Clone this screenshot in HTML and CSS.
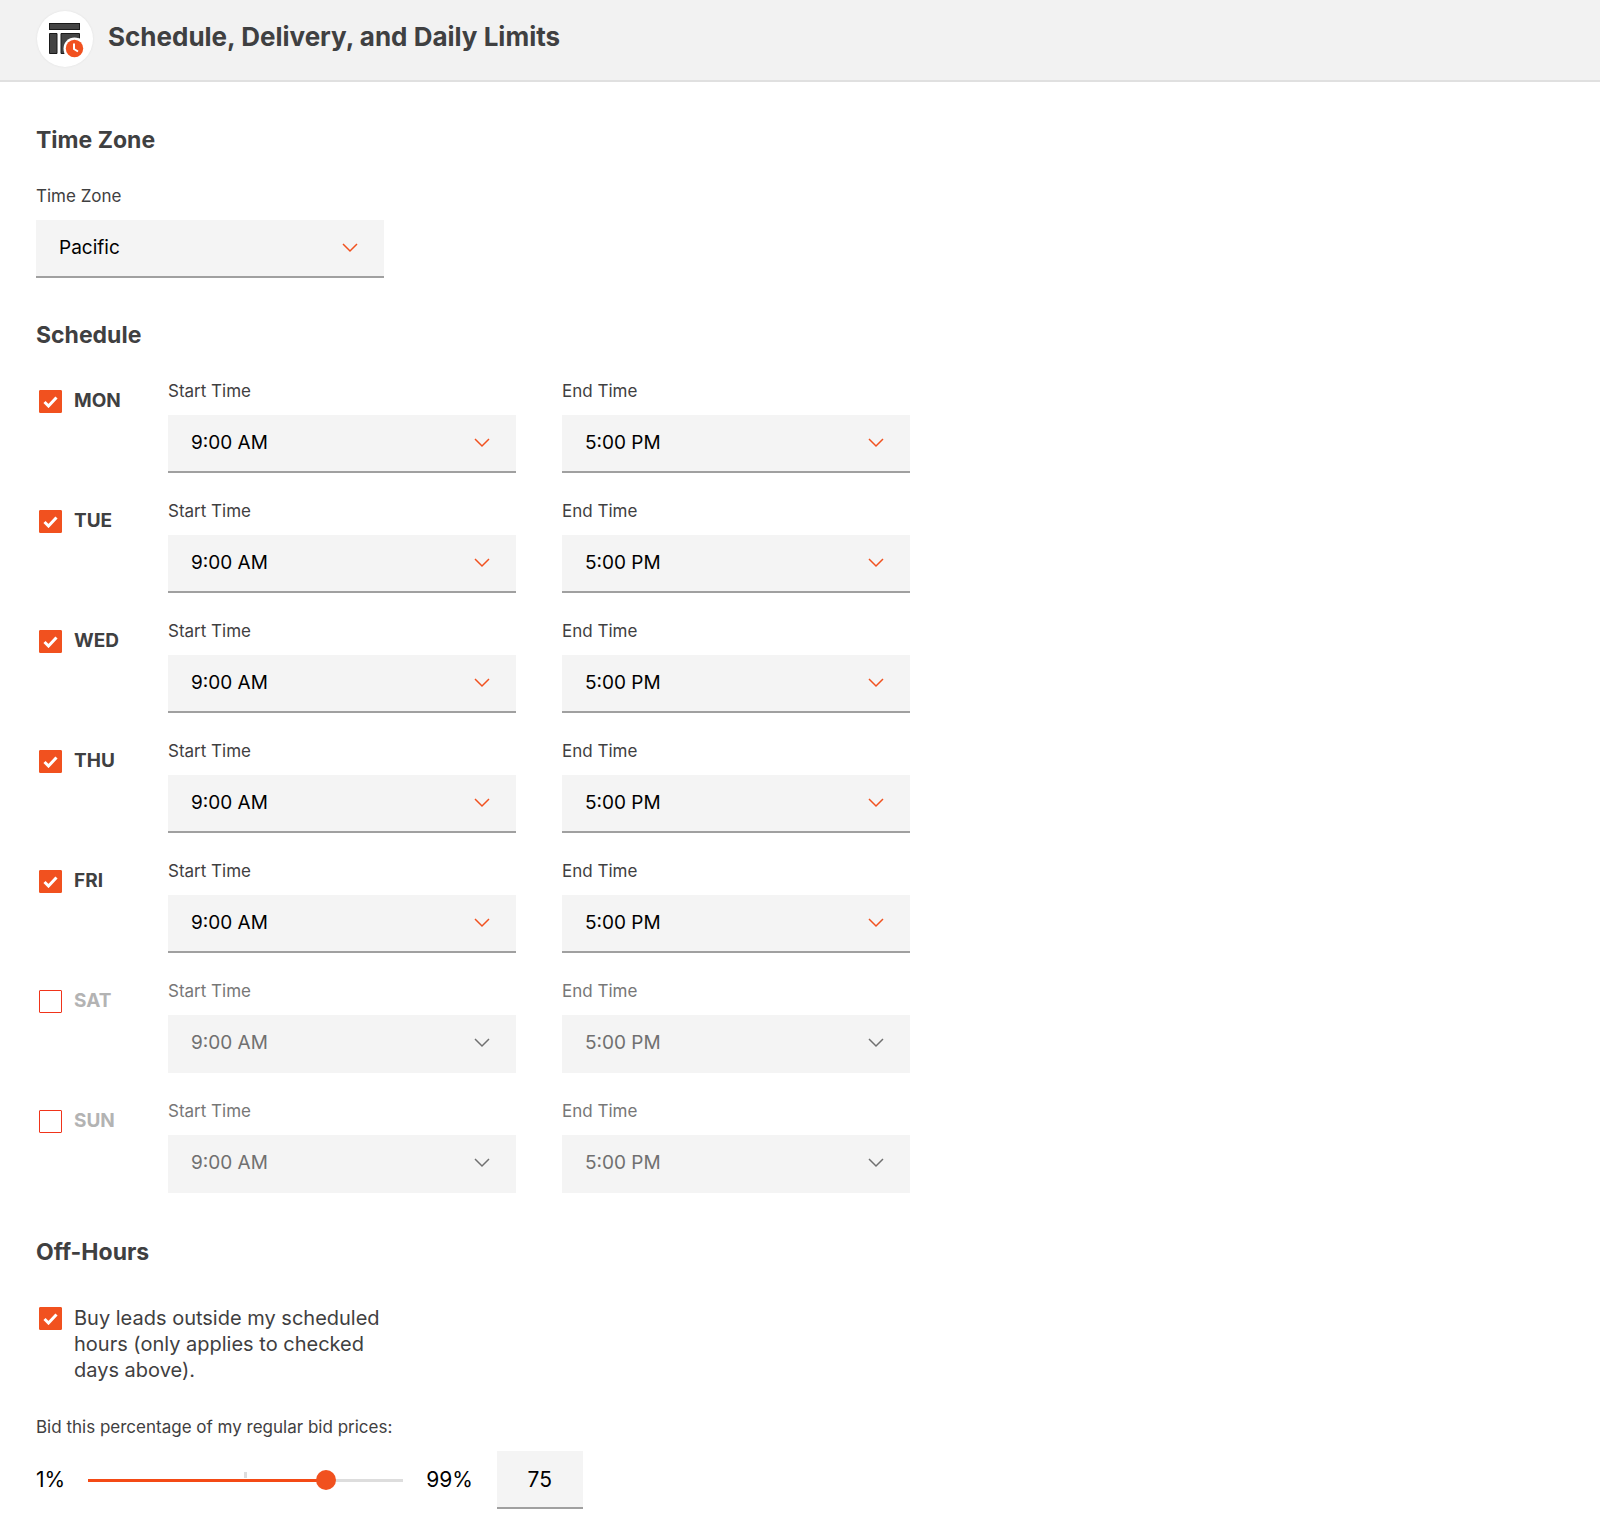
FILE: index.html
```
<!DOCTYPE html>
<html lang="en">
<head>
    <meta charset="utf-8">
    <title>Schedule, Delivery, and Daily Limits</title>
    <link rel="stylesheet" href="styles.css">
</head>
<body>
    <header class="header">
        <span class="logo">
            <svg width="56" height="56" viewBox="0 0 56 56" aria-hidden="true">
                <rect x="12.500" y="12.500" width="30" height="6" fill="#444" stroke="#1a1a1a"/>
                <path d="M12.500 22.500h7.500v20h-7.500zM24 22.500h18.500v20H24z" fill="#444" stroke="#1a1a1a"/>
                <path d="M27.500 46V38a10.500 10.500 0 0 1 10.500-10.500h8V46z" fill="#fff"/>
                <circle cx="37.500" cy="37.500" r="11" fill="#fff"/>
                <circle cx="37.500" cy="37.500" r="8.700" fill="#f1511f"/>
                <path d="M37 32.500v5.500l4 2.500" fill="none" stroke="#fff" stroke-width="2"/>
            </svg>
        </span>
        <h1>Schedule, Delivery, and Daily Limits</h1>
    </header>

    <main class="main">
        <section class="section">
            <h2>Time Zone</h2>
            <div class="field">
                <label for="zone">Time Zone</label>
                <select id="zone">
                    <option>Eastern</option>
                    <option>Central</option>
                    <option>Mountain</option>
                    <option selected>Pacific</option>
                </select>
            </div>
        </section>

        <section class="section">
            <h2>Schedule</h2>
            <ul class="days">
                <li class="day">
                    <label class="check"><input type="checkbox" checked><b>MON</b></label>
                    <div class="field">
                        <label for="mon-start">Start Time</label>
                        <select id="mon-start"><option>9:00 AM</option></select>
                    </div>
                    <div class="field">
                        <label for="mon-end">End Time</label>
                        <select id="mon-end"><option>5:00 PM</option></select>
                    </div>
                </li>
                <li class="day">
                    <label class="check"><input type="checkbox" checked><b>TUE</b></label>
                    <div class="field">
                        <label for="tue-start">Start Time</label>
                        <select id="tue-start"><option>9:00 AM</option></select>
                    </div>
                    <div class="field">
                        <label for="tue-end">End Time</label>
                        <select id="tue-end"><option>5:00 PM</option></select>
                    </div>
                </li>
                <li class="day">
                    <label class="check"><input type="checkbox" checked><b>WED</b></label>
                    <div class="field">
                        <label for="wed-start">Start Time</label>
                        <select id="wed-start"><option>9:00 AM</option></select>
                    </div>
                    <div class="field">
                        <label for="wed-end">End Time</label>
                        <select id="wed-end"><option>5:00 PM</option></select>
                    </div>
                </li>
                <li class="day">
                    <label class="check"><input type="checkbox" checked><b>THU</b></label>
                    <div class="field">
                        <label for="thu-start">Start Time</label>
                        <select id="thu-start"><option>9:00 AM</option></select>
                    </div>
                    <div class="field">
                        <label for="thu-end">End Time</label>
                        <select id="thu-end"><option>5:00 PM</option></select>
                    </div>
                </li>
                <li class="day">
                    <label class="check"><input type="checkbox" checked><b>FRI</b></label>
                    <div class="field">
                        <label for="fri-start">Start Time</label>
                        <select id="fri-start"><option>9:00 AM</option></select>
                    </div>
                    <div class="field">
                        <label for="fri-end">End Time</label>
                        <select id="fri-end"><option>5:00 PM</option></select>
                    </div>
                </li>
                <li class="day off">
                    <label class="check"><input type="checkbox"><b>SAT</b></label>
                    <div class="field">
                        <label for="sat-start">Start Time</label>
                        <select id="sat-start" disabled><option>9:00 AM</option></select>
                    </div>
                    <div class="field">
                        <label for="sat-end">End Time</label>
                        <select id="sat-end" disabled><option>5:00 PM</option></select>
                    </div>
                </li>
                <li class="day off">
                    <label class="check"><input type="checkbox"><b>SUN</b></label>
                    <div class="field">
                        <label for="sun-start">Start Time</label>
                        <select id="sun-start" disabled><option>9:00 AM</option></select>
                    </div>
                    <div class="field">
                        <label for="sun-end">End Time</label>
                        <select id="sun-end" disabled><option>5:00 PM</option></select>
                    </div>
                </li>
            </ul>
        </section>

        <section class="section">
            <h2>Off-Hours</h2>
            <label class="check buy">
                <input type="checkbox" checked>
                <span>Buy leads outside my scheduled hours (only applies to checked days above).</span>
            </label>
            <label class="bid-label" for="bid">Bid this percentage of my regular bid prices:</label>
            <div class="bid">
                <span>1%</span>
                <div class="slider">
                    <input type="range" id="bid" min="1" max="99" value="75" style="--fill: 75.5%">
                </div>
                <span>99%</span>
                <input type="text" class="number" value="75" aria-label="Bid percentage">
            </div>
        </section>
    </main>
</body>
</html>
```
FILE: styles.css
```
* {
    box-sizing: border-box;
    margin: 0;
    padding: 0;
}

body {
    background: #fff;
    color: #3f4041;
    font-family: Inter, Roboto, sans-serif;
    font-size: 19px;
    line-height: 26px;
}

ul {
    list-style: none;
}

/* header */
.header {
    display: flex;
    align-items: center;
    gap: 15px;
    padding: 11px 37px 13px;
    background: #f2f2f2;
    border-bottom: 2px solid #e0e0e0;
}

.logo {
    width: 56px;
    height: 56px;
    border-radius: 50%;
    background: #fff;
    box-shadow: 0 0 2px #ddd;
}

.logo svg {
    display: block;
}

h1 {
    padding-bottom: 4px;
    font-size: 26px;
    line-height: 32px;
}

h2 {
    margin-bottom: 30px;
    font-size: 23px;
    line-height: 28px;
}

/* sections */
.main {
    padding: 44px 36px 24px;
}

.section {
    margin-bottom: 43px;
}

.section:last-child {
    margin-bottom: 0;
}

.field {
    width: 348px;
}

.field label {
    display: block;
    margin-bottom: 12px;
    font-size: 17px;
    line-height: 24px;
}

select {
    display: block;
    width: 100%;
    height: 58px;
    padding: 0 23px;
    appearance: none;
    border: 0;
    border-bottom: 2px solid #a0a0a0;
    border-radius: 0;
    background: #f4f4f4 url("data:image/svg+xml,%3Csvg xmlns='http://www.w3.org/2000/svg' width='16' height='10'%3E%3Cpath d='M1 1l7 7 7-7' fill='none' stroke='%23f1511f' stroke-width='1.500'/%3E%3C/svg%3E") no-repeat right 26px center;
    color: #000;
    font: inherit;
}

/* schedule */
.days {
    display: flex;
    flex-direction: column;
    gap: 26px;
    padding-bottom: 2px;
}

.day {
    display: grid;
    grid-template-columns: 86px 348px 348px;
    column-gap: 46px;
}

.check {
    display: flex;
    align-items: flex-start;
    gap: 12px;
    padding: 9px 0 0 3px;
}

.check input {
    flex: none;
    width: 23px;
    height: 23px;
    margin-top: 2px;
    appearance: none;
    border: 1px solid #f0341a;
    border-radius: 1px;
    background: #fff;
}

.check input:checked {
    border-color: #f1511f;
    background: #f1511f url("data:image/svg+xml,%3Csvg xmlns='http://www.w3.org/2000/svg' width='15' height='12'%3E%3Cpath d='M1.500 6l4 4 8-8.500' fill='none' stroke='white' stroke-width='3'/%3E%3C/svg%3E") no-repeat center;
}

.off b {
    color: #b3b3b3;
}

.off .field label {
    color: #777;
}

.off select {
    border-bottom-color: #f4f4f4;
    background-image: url("data:image/svg+xml,%3Csvg xmlns='http://www.w3.org/2000/svg' width='16' height='10'%3E%3Cpath d='M1 1l7 7 7-7' fill='none' stroke='%23707070' stroke-width='1.500'/%3E%3C/svg%3E");
    color: #707070;
    opacity: 1;
}

/* off-hours */
.buy {
    width: 360px;
    font-size: 20px;
}

.bid-label {
    display: block;
    margin: 32px 0 12px;
    font-size: 17px;
    line-height: 24px;
}

.bid {
    display: flex;
    align-items: center;
    color: #000;
    font-size: 21px;
}

.slider {
    width: 335px;
    margin: 0 13px;
    background: linear-gradient(#ddd, #ddd) no-repeat center 2px / 3px 6px;
}

.slider input {
    display: block;
    width: 100%;
    height: 20px;
    appearance: none;
    background: none;
}

.slider input::-webkit-slider-runnable-track {
    height: 3px;
    background: linear-gradient(to right, transparent 10px, #f44a15 10px var(--fill), #ddd var(--fill) calc(100% - 10px), transparent calc(100% - 10px));
}

.slider input::-webkit-slider-thumb {
    width: 20px;
    height: 20px;
    margin-top: -9px;
    appearance: none;
    border-radius: 50%;
    background: #f1511f;
}

.number {
    width: 86px;
    height: 58px;
    margin-left: 24px;
    border: 0;
    border-bottom: 2px solid #a0a0a0;
    background: #f4f4f4;
    color: #000;
    font: inherit;
    text-align: center;
}
```
